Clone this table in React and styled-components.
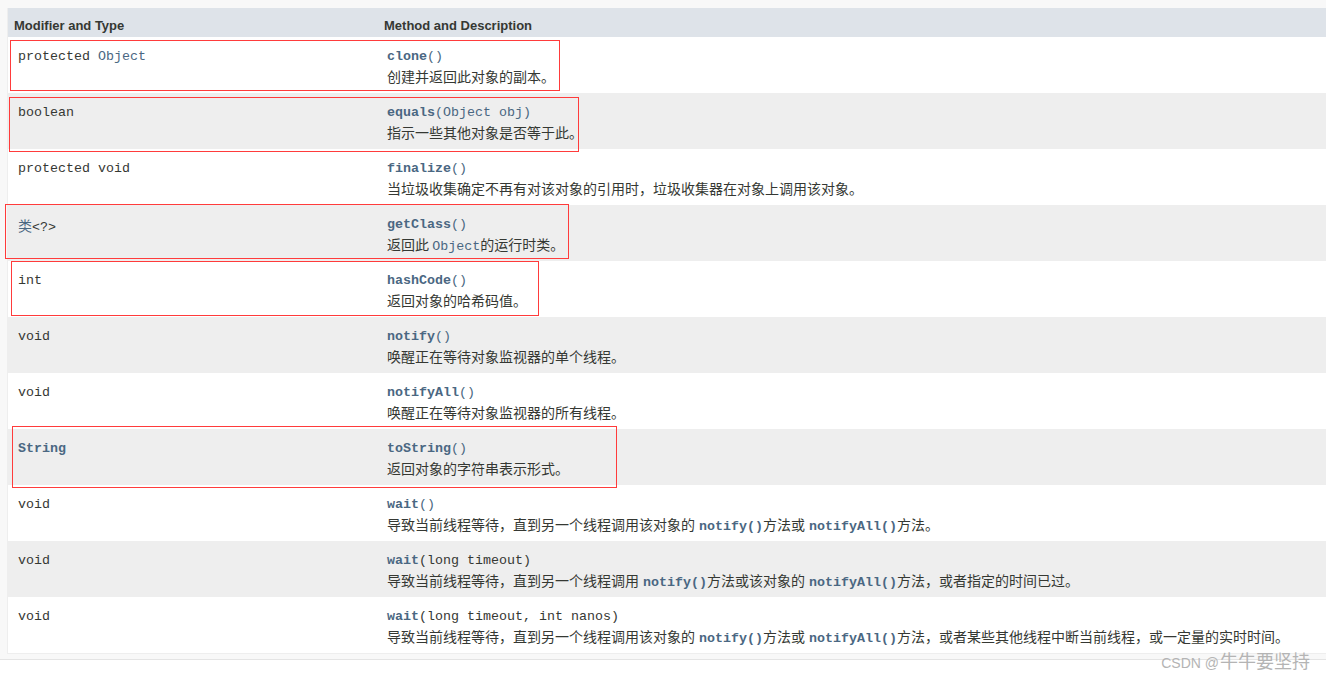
import React from "react";
import styled, { createGlobalStyle } from "styled-components";

const GlobalStyle = createGlobalStyle`
  html, body {
    margin: 0;
    padding: 0;
    background: #fff;
  }
  body {
    font-family: "Liberation Sans", Arial, sans-serif;
  }
`;

const Page = styled.div`
  position: relative;
  width: 1326px;
  height: 679px;
  overflow: hidden;
  background: #fff;
`;

const Frame = styled.div`
  background: #f8f8f8;
  padding: 8px 0 5px 7px;
  border-bottom: 1px solid #e4e4e4;
`;

const Table = styled.div`
  display: grid;
  grid-template-columns: 369px 1fr;
  border-left: 1px solid #eeeeee;
  border-bottom: 1px solid #eeeeee;
  background: #fff;
`;

const Th = styled.div`
  height: 29px;
  box-sizing: border-box;
  padding: 10px 3px 0 ${(p) => (p.first ? "6px" : "7px")};
  background: #dee3e9;
  color: #353833;
  font-weight: bold;
  font-size: 13px;
  line-height: 15px;
  white-space: nowrap;
`;

const Td = styled.div`
  height: 56px;
  box-sizing: border-box;
  padding: 10px 3px 0 10px;
  background: ${(p) => (p.alt ? "#eeeeee" : "#ffffff")};
  color: #353833;
  white-space: nowrap;
`;

const Code = styled.div`
  font-family: "Liberation Mono", "Courier New", monospace;
  font-size: 13.33px;
  line-height: 20px;
  color: #353833;
`;

const Desc = styled.div`
  font-family: "Noto Sans CJK SC", "Liberation Sans", sans-serif;
  font-size: 14px;
  line-height: 18px;
  color: #353833;
`;

const Link = styled.span`
  color: #4a6782;
  font-weight: ${(p) => (p.bold ? "bold" : "normal")};
`;

const CjkLink = styled.span`
  font-family: "Noto Sans CJK SC", sans-serif;
  font-size: 14px;
  color: #4a6782;
`;

const InCode = styled.span`
  font-family: "Liberation Mono", "Courier New", monospace;
  font-size: 13.33px;
  color: #4a6782;
  font-weight: ${(p) => (p.bold ? "bold" : "normal")};
  margin-left: ${(p) => (p.gap ? "4px" : "0")};
`;

const Mark = styled.div`
  position: absolute;
  border: 1px solid #ff3b3b;
  box-sizing: border-box;
  pointer-events: none;
`;

const Watermark = styled.div`
  position: absolute;
  right: 16px;
  top: 649px;
  font-family: "Noto Sans CJK SC", sans-serif;
  font-size: 18px;
  line-height: 22px;
  color: #b4b4b4;
`;

const WatermarkLatin = styled.span`
  font-family: "Liberation Sans", Arial, sans-serif;
  font-size: 14px;
  margin-right: 1px;
`;

const N = ({ children }) => (
  <InCode bold gap>
    {children}
  </InCode>
);

const rows = [
  {
    type: (
      <>
        protected <Link>Object</Link>
      </>
    ),
    method: (
      <>
        <Link bold>clone</Link>
        <Link>()</Link>
      </>
    ),
    desc: "创建并返回此对象的副本。",
  },
  {
    type: "boolean",
    method: (
      <>
        <Link bold>equals</Link>
        <Link>(Object obj)</Link>
      </>
    ),
    desc: "指示一些其他对象是否等于此。",
  },
  {
    type: "protected void",
    method: (
      <>
        <Link bold>finalize</Link>
        <Link>()</Link>
      </>
    ),
    desc: "当垃圾收集确定不再有对该对象的引用时，垃圾收集器在对象上调用该对象。",
  },
  {
    type: (
      <>
        <CjkLink>类</CjkLink>&lt;?&gt;
      </>
    ),
    method: (
      <>
        <Link bold>getClass</Link>
        <Link>()</Link>
      </>
    ),
    desc: (
      <>
        返回此 <InCode>Object</InCode>的运行时类。
      </>
    ),
  },
  {
    type: "int",
    method: (
      <>
        <Link bold>hashCode</Link>
        <Link>()</Link>
      </>
    ),
    desc: "返回对象的哈希码值。",
  },
  {
    type: "void",
    method: (
      <>
        <Link bold>notify</Link>
        <Link>()</Link>
      </>
    ),
    desc: "唤醒正在等待对象监视器的单个线程。",
  },
  {
    type: "void",
    method: (
      <>
        <Link bold>notifyAll</Link>
        <Link>()</Link>
      </>
    ),
    desc: "唤醒正在等待对象监视器的所有线程。",
  },
  {
    type: <Link bold>String</Link>,
    method: (
      <>
        <Link bold>toString</Link>
        <Link>()</Link>
      </>
    ),
    desc: "返回对象的字符串表示形式。",
  },
  {
    type: "void",
    method: (
      <>
        <Link bold>wait</Link>
        <Link>()</Link>
      </>
    ),
    desc: (
      <>
        导致当前线程等待，直到另一个线程调用该对象的<N>notify()</N>方法或
        <N>notifyAll()</N>方法。
      </>
    ),
  },
  {
    type: "void",
    method: (
      <>
        <Link bold>wait</Link>(long timeout)
      </>
    ),
    desc: (
      <>
        导致当前线程等待，直到另一个线程调用<N>notify()</N>方法或该对象的
        <N>notifyAll()</N>方法，或者指定的时间已过。
      </>
    ),
  },
  {
    type: "void",
    method: (
      <>
        <Link bold>wait</Link>(long timeout, int nanos)
      </>
    ),
    desc: (
      <>
        导致当前线程等待，直到另一个线程调用该对象的<N>notify()</N>方法或
        <N>notifyAll()</N>方法，或者某些其他线程中断当前线程，或一定量的实时时间。
      </>
    ),
  },
];

const marks = [
  { left: 10, top: 40, width: 550, height: 51 },
  { left: 9, top: 97, width: 570, height: 55 },
  { left: 5, top: 204, width: 564, height: 55 },
  { left: 11, top: 261, width: 528, height: 55 },
  { left: 12, top: 426, width: 605, height: 62 },
];

export default function App() {
  return (
    <>
      <GlobalStyle />
      <Page>
        <Frame>
          <Table>
            <Th first>Modifier and Type</Th>
            <Th>Method and Description</Th>
            {rows.map((r, i) => (
              <React.Fragment key={i}>
                <Td alt={i % 2 === 1}>
                  <Code>{r.type}</Code>
                </Td>
                <Td alt={i % 2 === 1}>
                  <Code>{r.method}</Code>
                  <Desc>{r.desc}</Desc>
                </Td>
              </React.Fragment>
            ))}
          </Table>
        </Frame>
        {marks.map((m, i) => (
          <Mark key={i} style={m} />
        ))}
        <Watermark>
          <WatermarkLatin>CSDN @</WatermarkLatin>牛牛要坚持
        </Watermark>
      </Page>
    </>
  );
}
